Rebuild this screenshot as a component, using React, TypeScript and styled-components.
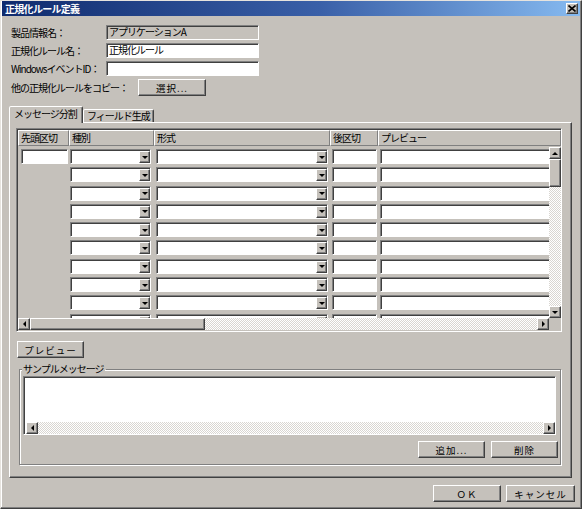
import React from "react";
import styled, { createGlobalStyle, css } from "styled-components";

const FACE = "#c5c1bb";
const SHADOW = "#808080";
const DARK = "#404040";

const GlobalStyle = createGlobalStyle`
  html, body {
    margin: 0;
    padding: 0;
    background: ${FACE};
  }
  body {
    font-family: "Noto Sans CJK JP", "DejaVu Sans", sans-serif;
    font-size: 10px;
    color: #000;
  }
  * {
    box-sizing: border-box;
  }
`;

const raised = css`
  border: 1px solid;
  border-color: #fff ${DARK} ${DARK} #fff;
  box-shadow: inset -1px -1px 0 ${SHADOW};
  background: ${FACE};
`;

const sunken = css`
  border: 1px solid;
  border-color: ${SHADOW} #fff #fff ${SHADOW};
  box-shadow: inset 1px 1px 0 ${DARK};
`;

const dither = css`
  background: repeating-conic-gradient(#fff 0 25%, #d9d6d1 0 50%) 0 0 / 2px 2px;
`;

const Window = styled.div`
  width: 582px;
  height: 509px;
  display: flex;
  flex-direction: column;
  background: ${FACE};
  border: 1px solid;
  border-color: #e6e3de ${DARK} ${DARK} #e6e3de;
  padding: 0 1px 1px 1px;
  box-shadow: inset -1px -1px 0 ${SHADOW}, inset 1px 1px 0 #fff;
`;

const TitleBar = styled.div`
  height: 15px;
  flex: none;
  display: flex;
  align-items: center;
  justify-content: space-between;
  padding: 0 2px 0 3px;
  background: linear-gradient(90deg, #0f2b6e 0%, #3a60a8 55%, #86baf0 100%);
`;

const Title = styled.span`
  color: #fff;
  font-weight: bold;
  font-size: 10px;
  letter-spacing: -0.7px;
  line-height: 15px;
`;

const CloseBox = styled.div`
  ${raised};
  width: 12px;
  height: 11px;
  display: flex;
  align-items: center;
  justify-content: center;
`;

const Form = styled.div`
  display: flex;
  flex-direction: column;
  gap: 3px;
  padding: 9px 0 0 9px;
`;

const FieldRow = styled.div`
  display: flex;
  align-items: center;
  height: 15px;
  &:last-child {
    height: 17px;
  }
`;

const Label = styled.span<{ $w?: number }>`
  width: ${(p) => (p.$w ? `${p.$w}px` : "auto")};
  margin-right: ${(p) => (p.$w ? 0 : 10)}px;
  letter-spacing: -1px;
  white-space: nowrap;
`;

const TextBox = styled.div<{ $gray?: boolean }>`
  ${sunken};
  width: 153px;
  height: 15px;
  background: ${(p) => (p.$gray ? FACE : "#fff")};
  padding: 0 2px;
  line-height: 12px;
  letter-spacing: -1px;
  white-space: nowrap;
  overflow: hidden;
`;

const Button = styled.div<{ $w: number }>`
  ${raised};
  width: ${(p) => p.$w}px;
  height: 17px;
  flex: none;
  display: flex;
  align-items: center;
  justify-content: center;
  letter-spacing: 1px;
  font-size: 9.5px;
  white-space: nowrap;
`;

const Tabs = styled.div`
  margin: 10px 8px 0 7px;
  display: flex;
  flex-direction: column;
`;

const TabStrip = styled.div`
  display: flex;
  align-items: flex-end;
  height: 16px;
`;

const Tab = styled.div<{ $active?: boolean; $w: number }>`
  width: ${(p) => p.$w}px;
  height: ${(p) => (p.$active ? 17 : 13)}px;
  margin-bottom: ${(p) => (p.$active ? -1 : 0)}px;
  position: relative;
  z-index: ${(p) => (p.$active ? 1 : 0)};
  background: ${FACE};
  border: 1px solid;
  border-bottom: none;
  border-color: #fff ${DARK} transparent #fff;
  box-shadow: inset -1px 0 0 ${SHADOW};
  border-radius: 2px 2px 0 0;
  padding: ${(p) => (p.$active ? "1px 0 0 4px" : "0 0 0 3px")};
  letter-spacing: -1px;
  line-height: 12px;
  white-space: nowrap;
`;

const Panel = styled.div`
  height: 356px;
  border: 1px solid;
  border-color: #fff ${DARK} ${DARK} #fff;
  box-shadow: inset -1px -1px 0 ${SHADOW};
  padding: 5px 9px 0 6px;
  display: flex;
  flex-direction: column;
`;

const Grid = styled.div`
  ${sunken};
  height: 204px;
  padding: 1px 0 0 1px;
  display: flex;
  flex-direction: column;
  background: ${FACE};
`;

const COLS = "51px 85px 176px 48px 1fr";

const HeaderRow = styled.div`
  display: grid;
  grid-template-columns: ${COLS};
  height: 16px;
  flex: none;
`;

const HeaderCell = styled.div`
  ${raised};
  box-shadow: none;
  border-color: #fff ${SHADOW} ${SHADOW} #fff;
  padding-left: 2px;
  line-height: 13px;
  letter-spacing: -1px;
  white-space: nowrap;
  overflow: hidden;
`;

const Body = styled.div`
  display: flex;
  height: 172px;
  flex: none;
`;

const Viewport = styled.div`
  flex: 1;
  overflow: hidden;
  padding-top: 3px;
`;

const Row = styled.div`
  display: grid;
  grid-template-columns: ${COLS};
  height: 18.3px;
  align-items: start;
`;

const CellBox = styled.div<{ $ml: number; $w: number }>`
  ${sunken};
  margin-left: ${(p) => p.$ml}px;
  width: ${(p) => p.$w}px;
  height: 15px;
  background: #fff;
`;

const Combo = styled.div<{ $ml: number; $w: number }>`
  ${sunken};
  margin-left: ${(p) => p.$ml}px;
  width: ${(p) => p.$w}px;
  height: 15px;
  background: #fff;
  display: flex;
  justify-content: flex-end;
  padding: 1px 0 0 0;
`;

const DropButton = styled.div`
  ${raised};
  width: 11px;
  height: 12px;
  display: flex;
  align-items: center;
  justify-content: center;
`;

const Arrow = styled.div<{ $dir: "up" | "down" | "left" | "right" }>`
  width: 0;
  height: 0;
  ${(p) =>
    p.$dir === "down"
      ? "border-left: 3px solid transparent; border-right: 3px solid transparent; border-top: 3px solid #000;"
      : p.$dir === "up"
      ? "border-left: 3px solid transparent; border-right: 3px solid transparent; border-bottom: 3px solid #000;"
      : p.$dir === "left"
      ? "border-top: 3px solid transparent; border-bottom: 3px solid transparent; border-right: 3px solid #000;"
      : "border-top: 3px solid transparent; border-bottom: 3px solid transparent; border-left: 3px solid #000;"}
`;

const VScroll = styled.div`
  width: 12px;
  flex: none;
  display: flex;
  flex-direction: column;
  padding-top: 1px;
`;

const HScroll = styled.div`
  height: 12px;
  flex: none;
  display: flex;
`;

const ScrollButton = styled.div`
  ${raised};
  width: 12px;
  height: 12px;
  flex: none;
  display: flex;
  align-items: center;
  justify-content: center;
`;

const Thumb = styled.div<{ $len: number; $vertical?: boolean }>`
  ${raised};
  flex: none;
  ${(p) => (p.$vertical ? `height: ${p.$len}px;` : `width: ${p.$len}px;`)}
`;

const Track = styled.div`
  flex: 1;
  ${dither};
`;

const Corner = styled.div`
  width: 12px;
  flex: none;
  background: ${FACE};
`;

const PreviewRow = styled.div`
  margin: 9px 0 0 1px;
`;

const GroupBox = styled.fieldset`
  margin: 5px 1px 0 3px;
  padding: 0 4px 6px 3px;
  border: 1px solid ${SHADOW};
  box-shadow: 1px 1px 0 #fff, inset 1px 1px 0 #fff;
  min-width: 0;
`;

const Legend = styled.legend`
  margin-left: 0;
  padding: 0 1px 0 1px;
  background: ${FACE};
  letter-spacing: -1px;
  line-height: 12px;
  position: relative;
  left: -1px;
`;

const MessageBox = styled.div`
  ${sunken};
  height: 59px;
  margin-top: 1px;
  background: #fff;
  padding: 2px 0 0 2px;
  display: flex;
  flex-direction: column;
  justify-content: flex-end;
`;

const ButtonBar = styled.div<{ $gap: number }>`
  display: flex;
  justify-content: flex-end;
  gap: ${(p) => p.$gap}px;
`;

const GroupButtons = styled(ButtonBar)`
  margin: 6px -2px 0 0;
`;

const Footer = styled(ButtonBar)`
  padding: 7px 5px 0 0;
`;

const CloseIcon = () => (
  <svg width="8" height="7" viewBox="0 0 8 7">
    <path d="M0.5 0.5 L7.5 6.5 M7.5 0.5 L0.5 6.5" stroke="#000" strokeWidth="1.6" />
  </svg>
);

const Dropdown = ({ ml, w }: { ml: number; w: number }) => (
  <Combo $ml={ml} $w={w}>
    <DropButton>
      <Arrow $dir="down" />
    </DropButton>
  </Combo>
);

const ROWS = Array.from({ length: 10 }, (_, i) => i);

export default function App() {
  return (
    <>
      <GlobalStyle />
      <Window>
        <TitleBar>
          <Title>正規化ルール定義</Title>
          <CloseBox>
            <CloseIcon />
          </CloseBox>
        </TitleBar>

        <Form>
          <FieldRow>
            <Label $w={95}>製品情報名：</Label>
            <TextBox $gray>アプリケーションA</TextBox>
          </FieldRow>
          <FieldRow>
            <Label $w={95}>正規化ルール名：</Label>
            <TextBox>正規化ルール</TextBox>
          </FieldRow>
          <FieldRow>
            <Label $w={95}>WindowsイベントID：</Label>
            <TextBox />
          </FieldRow>
          <FieldRow>
            <Label>他の正規化ルールをコピー：</Label>
            <Button $w={68}>選択...</Button>
          </FieldRow>
        </Form>

        <Tabs>
          <TabStrip>
            <Tab $active $w={74}>
              メッセージ分割
            </Tab>
            <Tab $w={71}>フィールド生成</Tab>
          </TabStrip>
          <Panel>
            <Grid>
              <HeaderRow>
                <HeaderCell>先頭区切</HeaderCell>
                <HeaderCell>種別</HeaderCell>
                <HeaderCell>形式</HeaderCell>
                <HeaderCell>後区切</HeaderCell>
                <HeaderCell>プレビュー</HeaderCell>
              </HeaderRow>
              <Body>
                <Viewport>
                  {ROWS.map((i) => (
                    <Row key={i}>
                      <div>{i === 0 && <CellBox $ml={3} $w={47} />}</div>
                      <Dropdown ml={1} w={81} />
                      <Dropdown ml={2} w={172} />
                      <CellBox $ml={2} $w={45} />
                      <CellBox $ml={2} $w={190} />
                    </Row>
                  ))}
                </Viewport>
                <VScroll>
                  <ScrollButton>
                    <Arrow $dir="up" />
                  </ScrollButton>
                  <Thumb $vertical $len={28} />
                  <Track />
                  <ScrollButton>
                    <Arrow $dir="down" />
                  </ScrollButton>
                </VScroll>
              </Body>
              <HScroll>
                <ScrollButton>
                  <Arrow $dir="left" />
                </ScrollButton>
                <Thumb $len={175} />
                <Track />
                <ScrollButton>
                  <Arrow $dir="right" />
                </ScrollButton>
                <Corner />
              </HScroll>
            </Grid>

            <PreviewRow>
              <Button $w={67}>プレビュー</Button>
            </PreviewRow>

            <GroupBox>
              <Legend>サンプルメッセージ</Legend>
              <MessageBox>
                <HScroll>
                  <ScrollButton>
                    <Arrow $dir="left" />
                  </ScrollButton>
                  <Track />
                  <ScrollButton>
                    <Arrow $dir="right" />
                  </ScrollButton>
                </HScroll>
              </MessageBox>
              <GroupButtons $gap={6}>
                <Button $w={67}>追加...</Button>
                <Button $w={67}>削除</Button>
              </GroupButtons>
            </GroupBox>
          </Panel>
        </Tabs>

        <Footer $gap={5}>
          <Button $w={68}>ＯＫ</Button>
          <Button $w={69}>キャンセル</Button>
        </Footer>
      </Window>
    </>
  );
}
